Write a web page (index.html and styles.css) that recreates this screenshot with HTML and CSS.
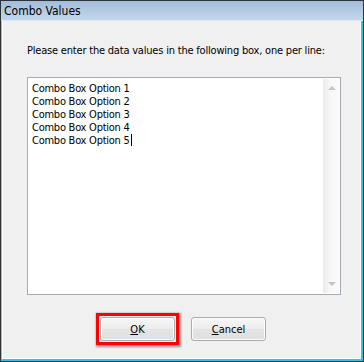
FILE: index.html
```html
<!DOCTYPE html>
<html>
<head>
<meta charset="utf-8">
<link rel="stylesheet" href="styles.css">
</head>
<body>
<div class="window">
  <div class="titlebar"><span class="title">Combo Values</span></div>
  <div class="frame">
    <div class="content">
      <p class="prompt">Please enter the data values in the following box, one per line:</p>
      <div class="editbox">
        <div class="lines">
          <div>Combo Box Option 1</div>
          <div>Combo Box Option 2</div>
          <div>Combo Box Option 3</div>
          <div>Combo Box Option 4</div>
          <div>Combo Box Option 5<span class="caret"></span></div>
        </div>
        <div class="scrollbar">
          <span class="arrow up"></span>
          <span class="arrow down"></span>
        </div>
      </div>
      <div class="buttons">
        <span class="highlight"><button class="btn"><u>O</u>K</button></span>
        <button class="btn"><u>C</u>ancel</button>
      </div>
    </div>
  </div>
</div>
</body>
</html>
```
FILE: styles.css
```css
html, body {
  margin: 0;
  padding: 0;
  background: #f0f0f0;
}
.window {
  width: 364px;
  height: 362px;
  box-sizing: border-box;
  border: 1px solid #2e3338;
  display: flex;
  flex-direction: column;
  font-family: "DejaVu Sans Condensed", "DejaVu Sans", sans-serif;
  font-size: 11px;
  color: #000;
}
.titlebar {
  height: 19px;
  flex: none;
  background: linear-gradient(#a3bcd8, #c2d7ed);
  border-bottom: 1px solid #dfe9f4;
  display: flex;
  align-items: center;
  padding-left: 3px;
}
.title {
  font-size: 12px;
  padding-top: 1px;
}
.frame {
  flex: 1;
  display: flex;
  border-left: 1px solid #9fb5cf;
  border-right: 2px solid #3bbfe6;
  border-bottom: 2px solid #3bbfe6;
}
.content {
  flex: 1;
  border-left: 1px solid #ffffff;
  border-right: 1px solid #ffffff;
  border-bottom: 1px solid #ffffff;
  padding: 23px 19px 0 24px;
  display: flex;
  flex-direction: column;
}
.prompt {
  margin: 0;
  line-height: 13px;
  letter-spacing: -0.2px;
}
.editbox {
  margin-top: 20px;
  height: 218px;
  box-sizing: border-box;
  border: 1px solid #a5acb5;
  background: #fff;
  display: flex;
}
.lines {
  flex: 1;
  padding: 4px 0 0 4px;
  line-height: 13px;
  letter-spacing: -0.25px;
}
.caret {
  display: inline-block;
  width: 1px;
  height: 12px;
  background: #000;
  vertical-align: -2px;
  margin-left: 1px;
}
.scrollbar {
  width: 17px;
  margin: 1px 0 1px 0;
  background: linear-gradient(to right, #e9e9e9, #f7f7f7 40%, #fbfbfb);
  display: flex;
  flex-direction: column;
  justify-content: space-between;
  align-items: center;
  padding: 7px 0 7px 0;
}
.arrow {
  width: 0;
  height: 0;
  border-left: 4px solid transparent;
  border-right: 4px solid transparent;
}
.arrow.up {
  border-bottom: 4px solid #c4c4c4;
}
.arrow.down {
  border-top: 4px solid #c4c4c4;
}
.buttons {
  display: flex;
  justify-content: center;
  align-items: center;
  gap: 16px;
  margin-top: 22px;
  padding-right: 2px;
}
.highlight {
  display: flex;
  border: 3px solid #ff0000;
  padding: 1px;
  margin: -4px;
  box-shadow: 1px 1px 2px 1px rgba(0,0,0,0.4);
}
.btn {
  width: 75px;
  height: 24px;
  box-sizing: border-box;
  border: 1px solid #acacac;
  border-radius: 3px;
  background: linear-gradient(#f6f6f6, #ececec 50%, #e4e4e4 51%, #dfdfdf);
  box-shadow: inset 0 0 0 1px #fcfcfc;
  font-family: inherit;
  font-size: 11px;
  color: #000;
  padding: 0;
}
```
